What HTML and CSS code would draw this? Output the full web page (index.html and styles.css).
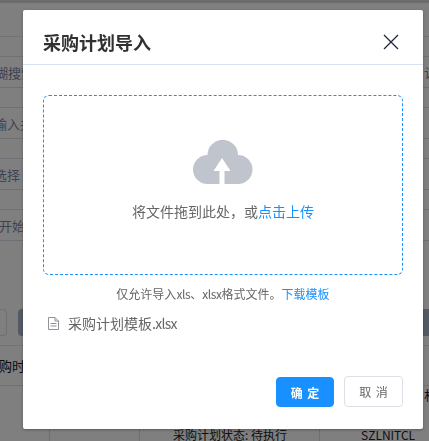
FILE: index.html
```html
<!DOCTYPE html>
<html lang="zh-CN">
<head>
<meta charset="utf-8">
<title>采购计划导入</title>
<link rel="stylesheet" href="styles.css">
</head>
<body>
<div class="page">
  <div class="topbar"></div>
  <div class="filter-row"><span class="label off-1">模糊搜索</span><span class="side">认</span></div>
  <div class="filter-row"><span class="label off-2">输入关键字</span></div>
  <div class="filter-row"><span class="label off-3">选择</span></div>
  <div class="filter-row"><span class="label off-4">开始日期</span></div>
  <div class="actions">
    <span class="btn-outline"></span>
    <span class="btn-dark"></span>
    <span class="btn-dark right"><span class="btn-text">量</span></span>
  </div>
  <div class="thead"><span class="th-label">采购时间</span></div>
  <div class="trow first">
    <span class="cell"></span><span class="cell"></span><span class="cell"></span>
    <span class="cell tail"><span class="edge-text">村</span></span>
  </div>
  <div class="trow">
    <span class="cell"></span><span class="cell"></span>
    <span class="cell center">采购计划状态: 待执行</span>
    <span class="cell code">SZLNITCL</span>
  </div>
</div>
<div class="mask"></div>
<section class="dialog">
  <header class="dialog-head">
    <h2 class="dialog-title">采购计划导入</h2>
    <svg class="close" viewBox="0 0 16 16" aria-hidden="true"><path d="M1 1 15 15M15 1 1 15"/></svg>
  </header>
  <div class="dialog-body">
    <div class="drop">
      <svg class="cloud" viewBox="0 0 60 44" aria-hidden="true">
        <path class="cloud-shape" d="M14.500 44A14.500 14.500 0 0 1 14.500 15A15.200 15.200 0 0 1 45 15A14.500 14.500 0 0 1 45 44Z"/>
        <path class="cloud-arrow" d="M29 18 37.500 31H31.500V44H26.500V31H20.500Z"/>
      </svg>
      <p class="drop-text">将文件拖到此处，或<em class="link">点击上传</em></p>
    </div>
    <p class="tip">仅允许导入<span class="latin">xls</span>、<span class="latin">xlsx</span>格式文件。<a class="link">下载模板</a></p>
    <div class="file">
      <svg class="file-icon" viewBox="0 0 11 13" aria-hidden="true"><path d="M.5.500H7L10.500 4V12.500H.5ZM7 .5V4H10.500M2.500 6.500H8.500M2.500 9H8.500"/></svg>
      <span>采购计划模板<span class="ext">.xlsx</span></span>
    </div>
  </div>
  <footer class="dialog-foot">
    <button class="btn primary">确 定</button>
    <button class="btn plain">取 消</button>
  </footer>
</section>
</body>
</html>
```
FILE: styles.css
```css
* { box-sizing: border-box; }
html, body { margin: 0; height: 100%; overflow: hidden; background: #fff; }
body { font-family: "Noto Sans CJK SC", "Liberation Sans", sans-serif; font-size: 14px; color: #606266; }

/* Underlying page */
.page { width: 429px; height: 441px; overflow: hidden; background: #fff; font-size: 13px; }
.topbar { height: 37px; border-top: 3px solid #d8d8d8; border-bottom: 1px solid #e4e6f0; }
.filter-row {
  height: 32px; margin-top: 19px; padding-top: 2px;
  border-top: 1px solid #e0e2ee; border-bottom: 1px solid #dcdee8;
  display: flex; align-items: center; justify-content: space-between;
  color: #7c869f; line-height: 20px; white-space: nowrap; overflow: hidden;
}
.filter-row:first-of-type { margin-top: 20px; }
.off-1 { margin-left: -18px; }
.off-2 { margin-left: -6px; }
.off-3 { margin-left: -6px; }
.off-4 { margin-left: -1px; }
.side { margin-right: -8px; }
.actions { height: 27px; margin-top: 68px; position: relative; display: flex; gap: 11px; }
.btn-outline { width: 7px; border: 1px solid #dcdfe6; border-left: 0; border-radius: 0 4px 4px 0; }
.btn-dark { width: 60px; background: #a9b5ca; border-radius: 4px; }
.btn-dark.right { margin-left: auto; margin-right: -40px; padding-left: 1px; color: #fff; line-height: 27px; }
.thead {
  height: 41px; margin-top: 9px;
  border-top: 1px solid #e4e6ee; border-bottom: 1px solid #dfe0ea;
  color: #111; line-height: 40px; white-space: nowrap;
}
.th-label { margin-left: -14px; display: inline-block; }
.trow { display: grid; grid-template-columns: 50px 90px 180px 132px; height: 17px; color: #222; white-space: nowrap; }
.trow.first { height: 41px; }
.cell { border-right: 1px solid #dedede; line-height: 15px; }
.center { text-align: center; font-size: 12px; padding-left: 1px; }
.code { padding-left: 41px; font-size: 12px; }
.tail { padding-left: 104px; line-height: 17px; color: #30103a; }

/* Mask and dialog */
.mask { position: fixed; inset: 0; background: rgba(0, 0, 0, .5); }
.dialog {
  position: fixed; left: 23px; top: 10px; width: 400px; height: 419px;
  background: #fff; border-radius: 2px; box-shadow: 0 1px 3px rgba(0, 0, 0, .3);
  display: flex; flex-direction: column;
}
.dialog-head {
  height: 55px; padding: 10px 24px 0 20px; flex: none;
  border-bottom: 1px solid #d6e2f1;
  display: flex; align-items: center; justify-content: space-between;
}
.dialog-title { margin: 0; font-size: 18px; font-weight: 700; color: #303133; line-height: 24px; }
.close { width: 16px; height: 16px; fill: none; stroke: #1c2740; stroke-width: 1.300; }
.dialog-body { flex: 1; padding: 30px 20px 0; }
.drop {
  width: 360px; height: 180px; border: 1px dashed #1890ff; border-radius: 6px;
  display: flex; flex-direction: column; align-items: center; padding-top: 44px;
}
.cloud { width: 60px; height: 44px; display: block; }
.cloud-shape { fill: #c0c4cc; }
.cloud-arrow { fill: #fff; }
.drop-text { margin: 9px 0 0; font-size: 14px; line-height: 36px; color: #666; }
.link { color: #1890ff; font-style: normal; }
.tip { margin: 7px 0 0; font-size: 12px; line-height: 24px; color: #666; text-align: center; }
.latin { letter-spacing: -.4px; }
.file { margin-top: 5px; padding-left: 5px; display: flex; align-items: center; gap: 9px; font-size: 14px; line-height: 24px; color: #666; }
.ext { letter-spacing: -.7px; }
.file-icon { width: 11px; height: 13px; fill: none; stroke: #909399; stroke-width: 1; flex: none; }
.dialog-foot { height: 52px; flex: none; padding: 0 20px 21px 0; display: flex; justify-content: flex-end; align-items: flex-start; gap: 10px; }
.btn { height: 30px; font: inherit; font-size: 12px; word-spacing: 2px; border-radius: 4px; padding: 0; cursor: pointer; }
.primary { width: 58px; background: #1890ff; border: 1px solid #1890ff; color: #fff; font-weight: 700; }
.plain { width: 59px; height: 31px; margin-top: -1px; background: #fff; border: 1px solid #dcdfe6; color: #666; }
```
